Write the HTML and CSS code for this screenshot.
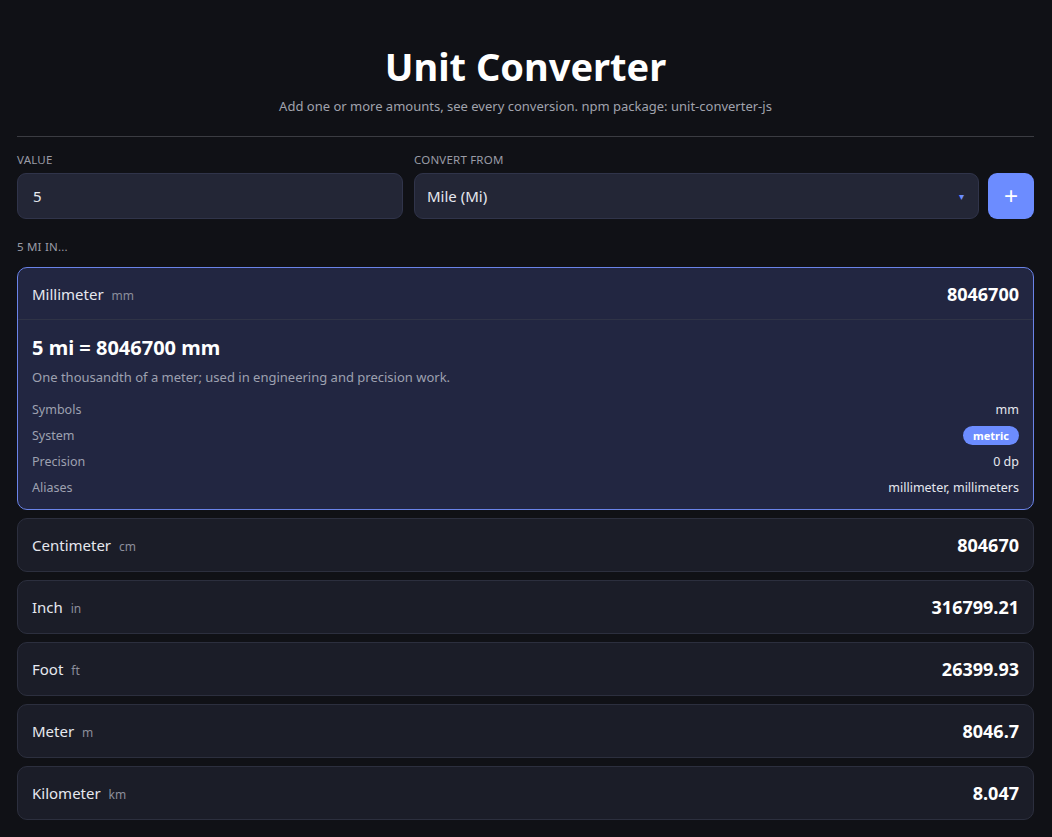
FILE: index.html
```html
<!DOCTYPE html>
<html lang="en">
<head>
  <meta charset="UTF-8" />
  <meta name="viewport" content="width=device-width, initial-scale=1" />
  <title>Unit Converter</title>
  <link rel="stylesheet" href="styles.css">
</head>
<body>
  <div class="wrap">
    <header class="head">
      <h1>Unit Converter</h1>
      <p class="sub">Add one or more amounts, see every conversion. npm package: unit-converter-js</p>
    </header>

    <div class="form">
      <div class="field">
        <label class="label">Value</label>
        <div class="input">5</div>
      </div>
      <div class="field">
        <label class="label">Convert from</label>
        <div class="input select">
          <span>Mile (Mi)</span>
          <span class="caret">&#9662;</span>
        </div>
      </div>
      <button class="add">+</button>
    </div>

    <div class="label result-label">5 mi in...</div>

    <div class="list">
      <div class="card open">
        <div class="row-head">
          <div class="name">Millimeter <span class="unit">mm</span></div>
          <div class="val">8046700</div>
        </div>
        <div class="detail">
          <div class="eq">5 mi = 8046700 mm</div>
          <p class="desc">One thousandth of a meter; used in engineering and precision work.</p>
          <div class="meta"><span>Symbols</span><span class="mv">mm</span></div>
          <div class="meta"><span>System</span><span class="badge">metric</span></div>
          <div class="meta"><span>Precision</span><span class="mv">0 dp</span></div>
          <div class="meta"><span>Aliases</span><span class="mv">millimeter, millimeters</span></div>
        </div>
      </div>

      <div class="card">
        <div class="row-head">
          <div class="name">Centimeter <span class="unit">cm</span></div>
          <div class="val">804670</div>
        </div>
      </div>
      <div class="card">
        <div class="row-head">
          <div class="name">Inch <span class="unit">in</span></div>
          <div class="val">316799.21</div>
        </div>
      </div>
      <div class="card">
        <div class="row-head">
          <div class="name">Foot <span class="unit">ft</span></div>
          <div class="val">26399.93</div>
        </div>
      </div>
      <div class="card">
        <div class="row-head">
          <div class="name">Meter <span class="unit">m</span></div>
          <div class="val">8046.7</div>
        </div>
      </div>
      <div class="card">
        <div class="row-head">
          <div class="name">Kilometer <span class="unit">km</span></div>
          <div class="val">8.047</div>
        </div>
      </div>
    </div>
  </div>
</body>
</html>
```

FILE: styles.css
```css
* {
  box-sizing: border-box;
}
body {
  margin: 0;
  background-color: #101116;
  color: #e6e8ef;
  font-family: 'Noto Sans', sans-serif;
}
.wrap {
  padding: 0 18px 0 17px;
}
.head {
  text-align: center;
  padding-top: 41px;
  padding-bottom: 21px;
  border-bottom: 1px solid #3b3c42;
}
h1 {
  margin: 0;
  font-size: 38px;
  font-weight: 700;
  color: #fff;
  line-height: 50px;
}
.sub {
  margin: 6px 0 0;
  font-size: 13px;
  color: #a0a3ad;
}
.form {
  display: flex;
  align-items: flex-end;
  margin-top: 15px;
}
.field {
  display: flex;
  flex-direction: column;
}
.field:first-child {
  width: 386px;
  margin-right: 11px;
}
.field:nth-child(2) {
  flex: 1;
  margin-right: 9px;
}
.label {
  font-size: 11.5px;
  text-transform: uppercase;
  color: #9a9ca6;
  letter-spacing: 0.2px;
  margin-bottom: 6px;
}
.input {
  height: 46px;
  background-color: #232636;
  border: 1px solid #30344a;
  border-radius: 9px;
  padding: 0 15px;
  display: flex;
  align-items: center;
  font-size: 15px;
  color: #e6e8ef;
}
.select {
  justify-content: space-between;
  padding: 0 14px 0 12px;
}
.caret {
  color: #6c8cff;
  font-size: 10px;
}
.add {
  width: 46px;
  height: 46px;
  border: none;
  border-radius: 9px;
  background-color: #6c8cff;
  color: #fff;
  font-size: 24px;
  font-weight: 500;
  line-height: 1;
  cursor: pointer;
  padding: 0;
}
.result-label {
  margin-top: 20px;
  margin-bottom: 13px;
}
.list {
  display: flex;
  flex-direction: column;
  gap: 8px;
}
.card {
  background-color: #1b1d28;
  border: 1px solid #2c2f3e;
  border-radius: 10px;
}
.card.open {
  background-color: #222641;
  border-color: #6a83e8;
}
.row-head {
  height: 52px;
  display: flex;
  align-items: center;
  justify-content: space-between;
  padding: 0 14px;
}
.open .row-head {
  border-bottom: 1px solid #2f3346;
}
.name {
  font-size: 15px;
  color: #e6e8ef;
}
.unit {
  font-size: 12px;
  color: #8b8e9b;
  margin-left: 4px;
}
.val {
  font-size: 18px;
  font-weight: 700;
  color: #fff;
}
.detail {
  padding: 14px 14px 9px;
}
.eq {
  font-size: 20px;
  font-weight: 700;
  color: #fff;
}
.desc {
  margin: 7px 0 10px;
  font-size: 13px;
  color: #9ea1b0;
}
.meta {
  display: flex;
  justify-content: space-between;
  align-items: center;
  height: 26px;
  font-size: 12.5px;
  color: #9ea1b0;
}
.mv {
  color: #e6e8ef;
}
.badge {
  background-color: #6c8cff;
  color: #fff;
  font-size: 11px;
  font-weight: 700;
  border-radius: 10px;
  padding: 2px 10px;
}
```
